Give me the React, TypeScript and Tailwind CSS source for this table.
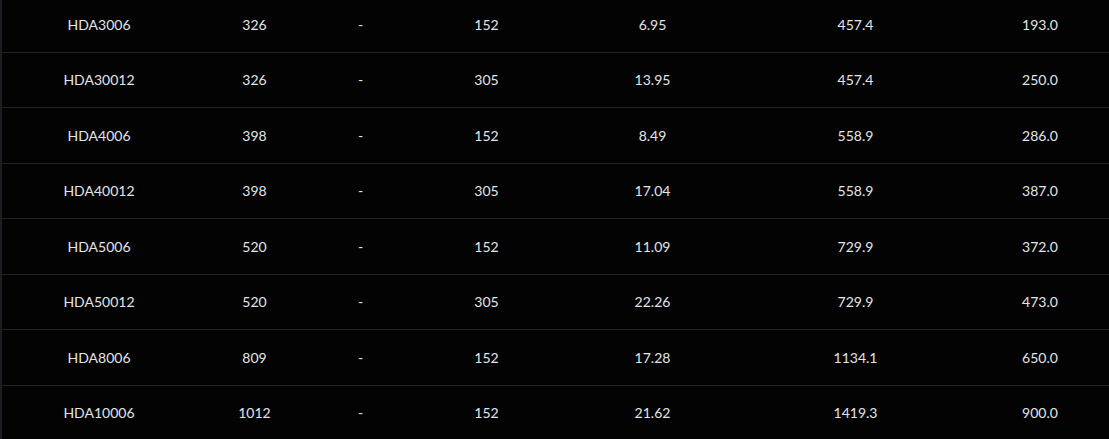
const rows = [
  ["HDA3006", "326", "-", "152", "6.95", "457.4", "193.0"],
  ["HDA30012", "326", "-", "305", "13.95", "457.4", "250.0"],
  ["HDA4006", "398", "-", "152", "8.49", "558.9", "286.0"],
  ["HDA40012", "398", "-", "305", "17.04", "558.9", "387.0"],
  ["HDA5006", "520", "-", "152", "11.09", "729.9", "372.0"],
  ["HDA50012", "520", "-", "305", "22.26", "729.9", "473.0"],
  ["HDA8006", "809", "-", "152", "17.28", "1134.1", "650.0"],
  ["HDA10006", "1012", "-", "152", "21.62", "1419.3", "900.0"],
];

export default function App() {
  return (
    <div className="flex h-[439px] w-[1109px] overflow-hidden bg-[#030303] font-['Lato','Liberation_Sans',sans-serif] text-[14px] text-[#e2e5e9]">
      <div className="w-[2px] shrink-0 bg-[#1b1e22]" />
      <div className="-mt-[3px] flex flex-1 flex-col">
        {rows.map((row) => (
          <div
            key={row[0]}
            className="grid h-[55.5px] shrink-0 grid-cols-[194px_117px_95px_157px_175px_231px_138px] items-center border-b border-[#222326]"
          >
            {row.map((cell, i) => (
              <div key={i} className="text-center">
                {cell}
              </div>
            ))}
          </div>
        ))}
      </div>
    </div>
  );
}
